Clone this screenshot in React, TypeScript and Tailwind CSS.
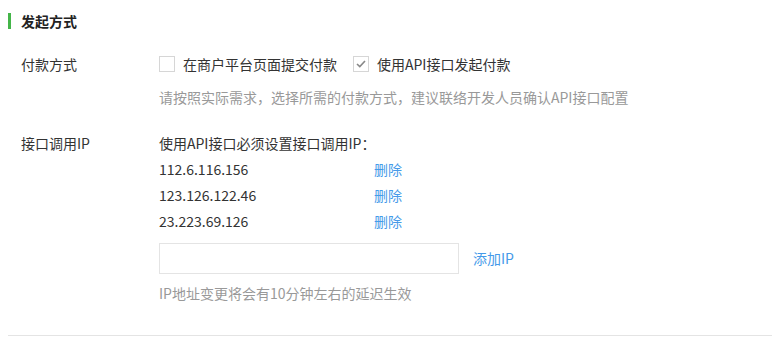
import React, { useState } from 'react';

const FONT = "font-['Microsoft_YaHei','Noto_Sans_CJK_SC','Noto_Sans',sans-serif]";

const Checkbox: React.FC<{ checked: boolean; label: string; onChange: () => void }> = ({ checked, label, onChange }) => {
  return (
    <label className="flex items-center cursor-pointer" onClick={onChange}>
      <span className="w-4 h-4 border border-[#d6d6d6] bg-white flex items-center justify-center">
        {checked && (
          <svg width="10" height="8" viewBox="0 0 10 8" fill="none">
            <path d="M1 4l2.8 2.6L9 1" stroke="#888" strokeWidth="1.6" />
          </svg>
        )}
      </span>
      <span className="ml-2 text-[#333]">{label}</span>
    </label>
  );
};

export default function App() {
  const [pageSubmit, setPageSubmit] = useState(false);
  const [apiSubmit, setApiSubmit] = useState(true);
  const [ips, setIps] = useState(['112.6.116.156', '123.126.122.46', '23.223.69.126']);
  const [value, setValue] = useState('');

  const addIp = () => {
    if (!value.trim()) return;
    setIps([...ips, value.trim()]);
    setValue('');
  };

  return (
    <div className={`w-[772px] h-[340px] bg-white pl-2 text-[14px] ${FONT}`}>
      <div className="pt-[13px]">
        <h3 className="border-l-[3px] border-[#44b549] pl-[10px] h-4 leading-4 font-bold text-[#222]">发起方式</h3>
      </div>

      <div className="flex mt-[25px] pl-[13px]">
        <div className="w-[138px] leading-5 text-[#333]">付款方式</div>
        <div className="leading-5">
          <div className="flex items-center gap-[16px]">
            <Checkbox checked={pageSubmit} label="在商户平台页面提交付款" onChange={() => setPageSubmit(!pageSubmit)} />
            <Checkbox checked={apiSubmit} label="使用API接口发起付款" onChange={() => setApiSubmit(!apiSubmit)} />
          </div>
          <p className="mt-[13px] text-[#999]">请按照实际需求，选择所需的付款方式，建议联络开发人员确认API接口配置</p>
        </div>
      </div>

      <div className="flex mt-[23px] pl-[13px]">
        <div className="w-[138px] leading-[26px] text-[#333]">接口调用IP</div>
        <div>
          <div className="leading-[26px] text-[#333]">使用API接口必须设置接口调用IP：</div>
          {ips.map((ip, i) => (
            <div key={i} className="flex leading-[26px]">
              <span className="w-[215px] text-[#333]">{ip}</span>
              <button className="text-[#459ae9]" onClick={() => setIps(ips.filter((_, j) => j !== i))}>删除</button>
            </div>
          ))}
          <div className="flex items-center mt-[9px]">
            <input
              value={value}
              onChange={e => setValue(e.target.value)}
              className="w-[300px] h-[31px] border border-[#e4e4e4] px-2 outline-none"
            />
            <button className="ml-[14px] text-[#459ae9]" onClick={addIp}>添加IP</button>
          </div>
          <p className="mt-[9px] leading-5 text-[#999]">IP地址变更将会有10分钟左右的延迟生效</p>
        </div>
      </div>

      <div className="mt-[32px] border-b border-[#e4e4e4]" />
    </div>
  );
}
